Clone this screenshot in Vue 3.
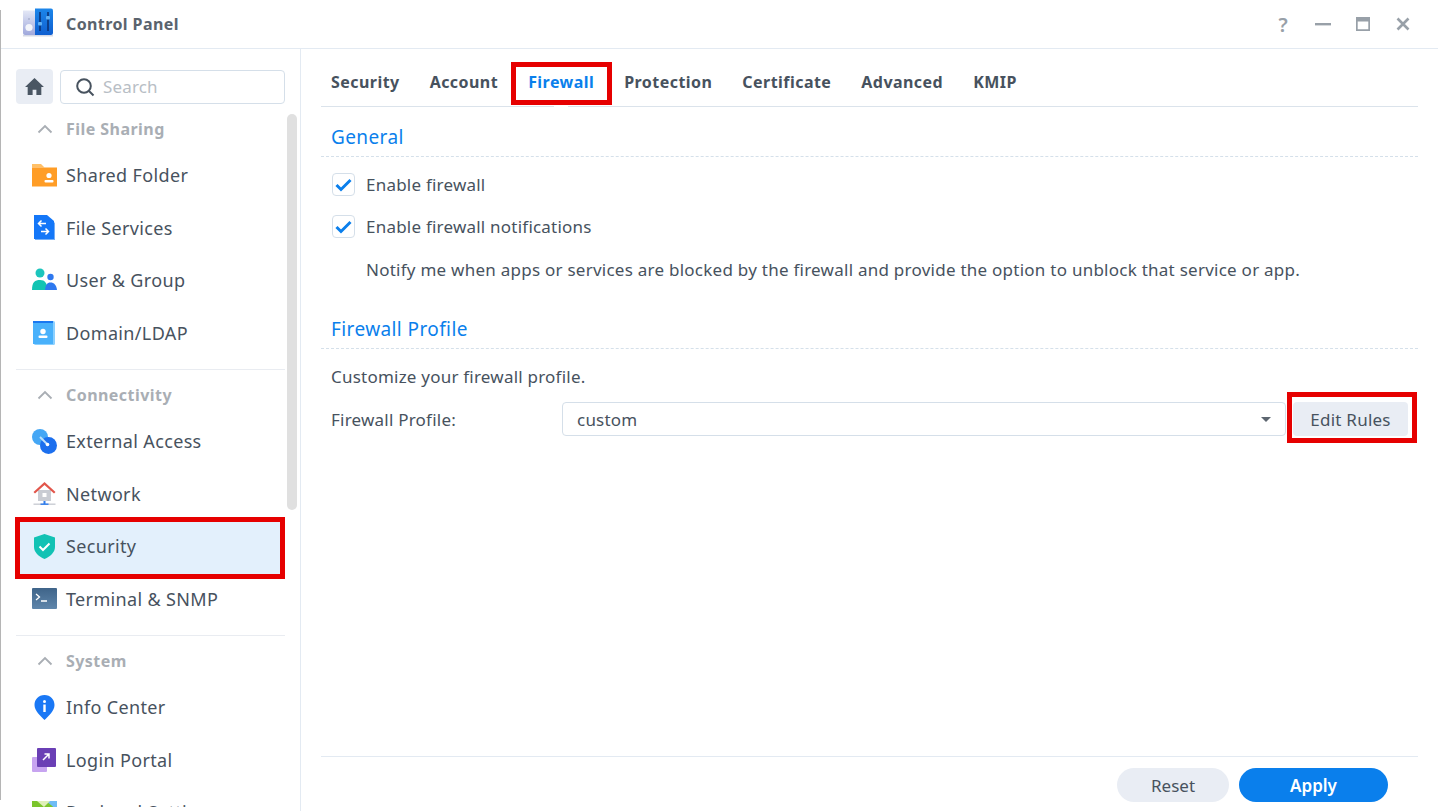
<template>
  <div class="window">
    <span class="edge"></span>
    <header class="titlebar">
      <svg class="app-icon" viewBox="0 0 30 30">
        <defs>
          <linearGradient id="knob" x1="0" y1="0" x2="0" y2="1">
            <stop offset="0" stop-color="#e4e8f6" />
            <stop offset="1" stop-color="#9fa8dc" />
          </linearGradient>
          <linearGradient id="panel" x1="0" y1="0" x2="0" y2="1">
            <stop offset="0" stop-color="#1c86ea" />
            <stop offset="1" stop-color="#0f5fd0" />
          </linearGradient>
        </defs>
        <path d="M0 2.500h12V27H2a2 2 0 0 1-2-2z" fill="url(#knob)" />
        <path d="M12 .5h16a2 2 0 0 1 2 2V25a2 2 0 0 1-2 2H12z" fill="url(#panel)" />
        <rect x="0" y="27" width="30" height="1.500" fill="#d5d9e6" />
        <circle cx="6" cy="19.500" r="3.600" fill="#f3f5fb" />
        <circle cx="6" cy="11" r="1" fill="#aab2cf" />
        <path d="M17 4v19M25 4v19" stroke="#0b2f70" stroke-width="1.500" />
        <rect x="15" y="14" width="4" height="3.500" rx="1" fill="#5fb0f5" />
        <rect x="23" y="8" width="4" height="3.500" rx="1" fill="#5fb0f5" />
      </svg>
      <span class="app-name">Control Panel</span>
      <div class="win-actions">
        <span class="help">?</span>
        <svg viewBox="0 0 16 16" class="win-icon"><rect x="0" y="7" width="16" height="2.400" fill="#98a0a8" /></svg>
        <svg viewBox="0 0 16 16" class="win-icon"><path fill-rule="evenodd" d="M1 1h14v14H1zM2.700 5.500v7.800h10.600V5.500z" fill="#98a0a8" /></svg>
        <svg viewBox="0 0 16 16" class="win-icon"><path d="M2.500 2.500l11 11M13.500 2.500l-11 11" stroke="#98a0a8" stroke-width="2.600" /></svg>
      </div>
    </header>

    <div class="body">
      <aside class="sidebar">
        <div class="side-scroll">
          <div class="search-row">
            <button class="home">
              <svg viewBox="0 0 20 20" width="21" height="21">
                <path d="M10 2L1 10.500h2.500V18h4.700v-5h3.600v5h4.700v-7.500H19z" fill="#4a5663" />
              </svg>
            </button>
            <div class="search">
              <svg viewBox="0 0 20 20" width="20" height="20">
                <circle cx="9" cy="9" r="6.800" fill="none" stroke="#47525e" stroke-width="2" />
                <path d="M14 14l4.500 4.500" stroke="#47525e" stroke-width="2" />
              </svg>
              <span class="search-text">Search</span>
            </div>
          </div>

          <section v-for="(group, g) in groups" :key="group.title" class="group" :class="{ divided: g > 0 }">
            <div class="group-title">
              <svg viewBox="0 0 16 10" width="16" height="10">
                <path d="M1.500 8.500L8 2l6.500 6.500" fill="none" stroke="#a9aeb4" stroke-width="1.800" />
              </svg>
              {{ group.title }}
            </div>
            <div v-for="item in group.items" :key="item.label" class="nav-item" :class="{ selected: item.selected }">
              <svg class="nav-icon" viewBox="0 0 25 25">
                <template v-if="item.icon === 'folder'">
                  <path d="M0 1h9l3.500 3.500H0z" fill="#ffc067" />
                  <rect x="0" y="4.500" width="25" height="19" fill="#ff9d26" />
                  <circle cx="17" cy="12.500" r="2.600" fill="#fff" />
                  <rect x="12.500" y="17" width="9" height="2.500" rx="1" fill="#fff" />
                </template>
                <template v-else-if="item.icon === 'services'">
                  <path d="M3 2h13l7 6v17H3z" fill="#74aef7" />
                  <path d="M2 0h13l7 6v18H2z" fill="#1477f8" />
                  <path d="M14 8.500H7M9.500 5.500L6.500 8.500l3 3M9 16.500h7.500M13.500 13.500l3 3-3 3" fill="none" stroke="#fff" stroke-width="1.500" />
                </template>
                <template v-else-if="item.icon === 'users'">
                  <circle cx="8" cy="5" r="4.500" fill="#1cc5bd" />
                  <path d="M0 22c0-8 3-10 8-10s7 3 8 10z" fill="#12c4b2" />
                  <circle cx="18.500" cy="9" r="3.200" fill="#2e78ef" />
                  <path d="M13 22c.5-5 2-7.500 5.500-7.500S24.500 17 25 22z" fill="#2e78ef" />
                </template>
                <template v-else-if="item.icon === 'domain'">
                  <rect x="2" y="1" width="21" height="24" rx="1.500" fill="#8bd0ff" />
                  <rect x="1" y="1" width="20" height="3" fill="#1a78f0" />
                  <rect x="1" y="3" width="20" height="21" fill="#49b1fb" />
                  <circle cx="11" cy="11.500" r="2.700" fill="#fff" />
                  <rect x="6.500" y="15.500" width="9" height="2.600" rx="1" fill="#fff" />
                </template>
                <template v-else-if="item.icon === 'external'">
                  <circle cx="8" cy="8" r="8" fill="#45a7f5" />
                  <circle cx="16.500" cy="16.500" r="8.500" fill="#1c6fee" />
                  <path d="M8 8l8.500 8.500" stroke="#bfe0fb" stroke-width="2" />
                  <circle cx="15.500" cy="15.500" r="1.800" fill="#fff" />
                </template>
                <template v-else-if="item.icon === 'network'">
                  <rect x="6" y="9" width="13" height="11" fill="#c9ccd3" />
                  <path d="M12.500 1L1.500 11l1.500 1.500 9.500-8.500 9.500 8.500 1.500-1.500z" fill="#e2564b" />
                  <rect x="10.500" y="12" width="4" height="4" fill="#fff" />
                  <rect x="1.500" y="22.500" width="22" height="1.400" fill="#c9ccd3" />
                  <rect x="11.500" y="20" width="2" height="3" fill="#2f7ded" />
                  <rect x="8.500" y="22.500" width="8" height="1.400" fill="#2f7ded" />
                </template>
                <template v-else-if="item.icon === 'shield'">
                  <path d="M12.500 0L23 3.500V13c0 5-4.500 9.500-10.500 12C6.500 22.500 2 18 2 13V3.500z" fill="#12c2b4" />
                  <path d="M7.500 12.500l3.500 3.500 6.500-6.500" fill="none" stroke="#fff" stroke-width="2" />
                </template>
                <template v-else-if="item.icon === 'terminal'">
                  <defs>
                    <linearGradient id="term" x1="0" y1="0" x2="0" y2="1">
                      <stop offset="0" stop-color="#3f6489" />
                      <stop offset="1" stop-color="#5f86ab" />
                    </linearGradient>
                  </defs>
                  <rect x="0" y="2" width="25" height="21" rx="1" fill="url(#term)" />
                  <path d="M4 8l3.500 3L4 14M9 15h6" fill="none" stroke="#fff" stroke-width="1.300" />
                </template>
                <template v-else-if="item.icon === 'info'">
                  <path d="M12.500 0C6.500 0 2.500 4.500 2.500 10c0 6 6 11 10 15 4-4 10-9 10-15 0-5.500-4-10-10-10z" fill="#1a78f5" />
                  <circle cx="12.500" cy="6.500" r="1.500" fill="#fff" />
                  <rect x="11.300" y="9.500" width="2.400" height="7.500" fill="#fff" />
                </template>
                <template v-else-if="item.icon === 'portal'">
                  <rect x="0" y="10" width="15" height="15" rx="1" fill="#c7a4f0" />
                  <rect x="5" y="1" width="19" height="19" rx="1" fill="#6a3fb5" />
                  <path d="M11 13l6-6M12.500 7H17v4.500" fill="none" stroke="#fff" stroke-width="1.500" />
                </template>
                <template v-else>
                  <rect x="0" y="1" width="25" height="24" fill="#7cc52c" />
                  <path d="M14 1h11v9z" fill="#6fbcf5" />
                  <path d="M5 1l7 6 6-6z" fill="#dff0b8" />
                </template>
              </svg>
              <span class="nav-label">{{ item.label }}</span>
            </div>
          </section>
        </div>
        <span class="scrollbar"></span>
      </aside>

      <main class="content">
        <nav class="tabs">
          <span v-for="tab in tabs" :key="tab" class="tab" :class="{ active: tab === 'Firewall' }">{{ tab }}</span>
        </nav>

        <div class="panel">
          <h2 class="section-title">General</h2>
          <label class="check first">
            <span class="box"><svg viewBox="0 0 21 21"><path d="M3.500 11l4.500 4.500L17.500 6" fill="none" stroke="#0a7fec" stroke-width="3" /></svg></span>
            Enable firewall
          </label>
          <label class="check second">
            <span class="box"><svg viewBox="0 0 21 21"><path d="M3.500 11l4.500 4.500L17.500 6" fill="none" stroke="#0a7fec" stroke-width="3" /></svg></span>
            Enable firewall notifications
          </label>
          <p class="desc">Notify me when apps or services are blocked by the firewall and provide the option to unblock that service or app.</p>

          <h2 class="section-title profile">Firewall Profile</h2>
          <p class="note">Customize your firewall profile.</p>
          <div class="profile-row">
            <span class="field-label">Firewall Profile:</span>
            <div class="select">
              <span>custom</span>
              <i class="caret"></i>
            </div>
            <button class="edit">Edit Rules</button>
          </div>
        </div>

        <footer class="footer">
          <button class="pill reset">Reset</button>
          <button class="pill apply">Apply</button>
        </footer>
      </main>
    </div>
  </div>
</template>

<script setup>
const tabs = ['Security', 'Account', 'Firewall', 'Protection', 'Certificate', 'Advanced', 'KMIP']

const groups = [
  {
    title: 'File Sharing',
    items: [
      { label: 'Shared Folder', icon: 'folder' },
      { label: 'File Services', icon: 'services' },
      { label: 'User & Group', icon: 'users' },
      { label: 'Domain/LDAP', icon: 'domain' }
    ]
  },
  {
    title: 'Connectivity',
    items: [
      { label: 'External Access', icon: 'external' },
      { label: 'Network', icon: 'network' },
      { label: 'Security', icon: 'shield', selected: true },
      { label: 'Terminal & SNMP', icon: 'terminal' }
    ]
  },
  {
    title: 'System',
    items: [
      { label: 'Info Center', icon: 'info' },
      { label: 'Login Portal', icon: 'portal' },
      { label: 'Regional Settings', icon: 'regional' }
    ]
  }
]
</script>

<style>
html,
body {
  margin: 0;
  overflow: hidden;
  background: #fff;
}
</style>

<style scoped>
.window {
  position: relative;
  width: 1438px;
  height: 811px;
  overflow: hidden;
  display: flex;
  flex-direction: column;
  font-family: "Noto Sans", sans-serif;
  color: #47525e;
  background: #fff;
}

.edge {
  position: absolute;
  left: 0;
  top: 10px;
  width: 1px;
  height: 790px;
  background: #b5b5b5;
  z-index: 3;
}

.titlebar {
  flex: none;
  height: 49px;
  box-sizing: border-box;
  display: flex;
  align-items: center;
  padding: 0 27px 0 23px;
  border-bottom: 1px solid #e3eaf2;
}

.app-icon {
  width: 30px;
  height: 30px;
  margin-top: -2px;
}

.app-name {
  margin-left: 13px;
  margin-top: -1px;
  font-size: 16px;
  font-weight: 700;
  letter-spacing: 0.4px;
  color: #5a636d;
}

.win-actions {
  margin-left: auto;
  display: flex;
  align-items: center;
  gap: 24px;
}

.help {
  width: 16px;
  text-align: center;
  font-size: 20px;
  font-weight: 600;
  color: #98a0a8;
}

.win-icon {
  width: 16px;
  height: 16px;
}

.body {
  flex: 1;
  display: flex;
  min-height: 0;
}

.sidebar {
  position: relative;
  flex: none;
  width: 301px;
  box-sizing: border-box;
  border-right: 1px solid #e3eaf2;
}

.side-scroll {
  height: 758px;
  box-sizing: border-box;
  padding: 20px 15px 0 16px;
  overflow: hidden;
}

.search-row {
  display: flex;
  gap: 7px;
  height: 40px;
}

.home {
  width: 37px;
  height: 35px;
  padding: 0;
  border: 0;
  border-radius: 4px;
  background: #e9edf4;
  display: flex;
  align-items: center;
  justify-content: center;
}

.search {
  flex: 1;
  height: 34px;
  margin-top: 1px;
  box-sizing: border-box;
  border: 1px solid #d5dfe9;
  border-radius: 4px;
  display: flex;
  align-items: center;
  gap: 8px;
  padding-left: 14px;
  font-size: 17px;
  letter-spacing: 0.15px;
  color: #b8bec5;
}

.search-text {
  margin-top: -1px;
}

.group.divided {
  margin-top: 10px;
  padding-top: 5px;
  border-top: 1px solid #e9ecf1;
}

.group-title {
  height: 40px;
  display: flex;
  align-items: center;
  gap: 13px;
  padding-left: 21px;
  font-size: 16px;
  font-weight: 700;
  letter-spacing: 0.45px;
  color: #a9aeb4;
}

.nav-item {
  position: relative;
  height: 52.5px;
  display: flex;
  align-items: center;
  gap: 9px;
  padding-left: 16px;
}

.nav-item.selected::after {
  content: "";
  position: absolute;
  left: -1px;
  right: 0;
  top: -3px;
  bottom: -6px;
  border: 5px solid #e60000;
  background: #e3f0fc;
}

.nav-icon,
.nav-label {
  position: relative;
  z-index: 1;
}

.nav-icon {
  width: 25px;
  height: 25px;
  flex: none;
}

.nav-label {
  font-size: 18px;
  letter-spacing: 0.35px;
}

.scrollbar {
  position: absolute;
  left: 287px;
  top: 65px;
  width: 10px;
  height: 396px;
  border-radius: 5px;
  background: #e0e0e0;
  z-index: 2;
}

.content {
  flex: 1;
  min-width: 0;
  display: flex;
  flex-direction: column;
  padding: 0 20px;
}

.tabs {
  flex: none;
  height: 58px;
  box-sizing: border-box;
  display: flex;
  align-items: center;
  gap: 30px;
  padding: 9px 10px 0;
  border-bottom: 1px solid #dbe3eb;
}

.tab {
  position: relative;
  font-size: 16px;
  font-weight: 700;
  letter-spacing: 0.45px;
  color: #47525e;
}

.tab.active {
  color: #0a7fec;
}

.tab.active::before {
  content: "";
  position: absolute;
  left: 26px;
  width: 14px;
  top: 34px;
  height: 2px;
  background: #fff;
}

.tab.active::after {
  content: "";
  position: absolute;
  left: -17px;
  right: -18px;
  top: -9px;
  bottom: -12px;
  border: 5px solid #e60000;
}

.panel {
  flex: 1;
  padding: 0 0 0 10px;
}

.section-title {
  margin: 0 0 0 -10px;
  padding: 16px 10px 6px;
  height: 50px;
  box-sizing: border-box;
  font-size: 19px;
  font-weight: 400;
  line-height: 28px;
  letter-spacing: 0.4px;
  color: #0a7fec;
  border-bottom: 1px dashed #d5e0ea;
}

.check {
  display: flex;
  align-items: center;
  gap: 11px;
  height: 24px;
  font-size: 17px;
  letter-spacing: 0.22px;
  padding-left: 1px;
}

.check.first {
  margin-top: 15px;
}

.check.second {
  margin-top: 18px;
}

.box {
  width: 23px;
  height: 23px;
  box-sizing: border-box;
  border: 1px solid #d5dfe9;
  border-radius: 4px;
  display: block;
}

.box svg {
  display: block;
  width: 21px;
  height: 21px;
}

.desc {
  margin: 20px 0 0 35px;
  font-size: 17px;
  line-height: 24px;
  letter-spacing: 0.25px;
}

.section-title.profile {
  margin-top: 17px;
}

.note {
  margin: 16px 0 0;
  font-size: 17px;
  line-height: 24px;
  letter-spacing: 0.22px;
}

.profile-row {
  display: flex;
  align-items: center;
  margin-top: 13px;
  height: 34px;
}

.field-label {
  width: 231px;
  flex: none;
  font-size: 17px;
  letter-spacing: 0.22px;
}

.select {
  flex: 1;
  height: 34px;
  box-sizing: border-box;
  border: 1px solid #d5dfe9;
  border-radius: 4px;
  display: flex;
  align-items: center;
  justify-content: space-between;
  padding: 0 14px;
  font-size: 17px;
  letter-spacing: 0.22px;
}

.caret {
  width: 0;
  height: 0;
  border-left: 5px solid transparent;
  border-right: 5px solid transparent;
  border-top: 5px solid #5d6670;
}

.edit {
  position: relative;
  flex: none;
  width: 115px;
  height: 34px;
  margin: 0 10px 0 7px;
  padding: 0;
  border: 0;
  border-radius: 4px;
  background: #e9edf4;
  font: 17px "Noto Sans", sans-serif;
  letter-spacing: 0.25px;
  color: #47525e;
}

.edit::after {
  content: "";
  position: absolute;
  left: -6px;
  right: -9px;
  top: -10px;
  bottom: -7px;
  border: 5px solid #e60000;
}

.footer {
  flex: none;
  height: 55px;
  box-sizing: border-box;
  display: flex;
  justify-content: flex-end;
  gap: 10px;
  padding: 11px 30px 0 0;
  border-top: 1px solid #e3eaf2;
}

.pill {
  height: 34px;
  padding: 0;
  border: 0;
  border-radius: 17px;
  font: 17px "Noto Sans", sans-serif;
}

.reset {
  width: 112px;
  background: #e9edf4;
  color: #47525e;
}

.apply {
  width: 149px;
  background: #0a7fec;
  color: #fff;
  font-weight: 600;
}
</style>
